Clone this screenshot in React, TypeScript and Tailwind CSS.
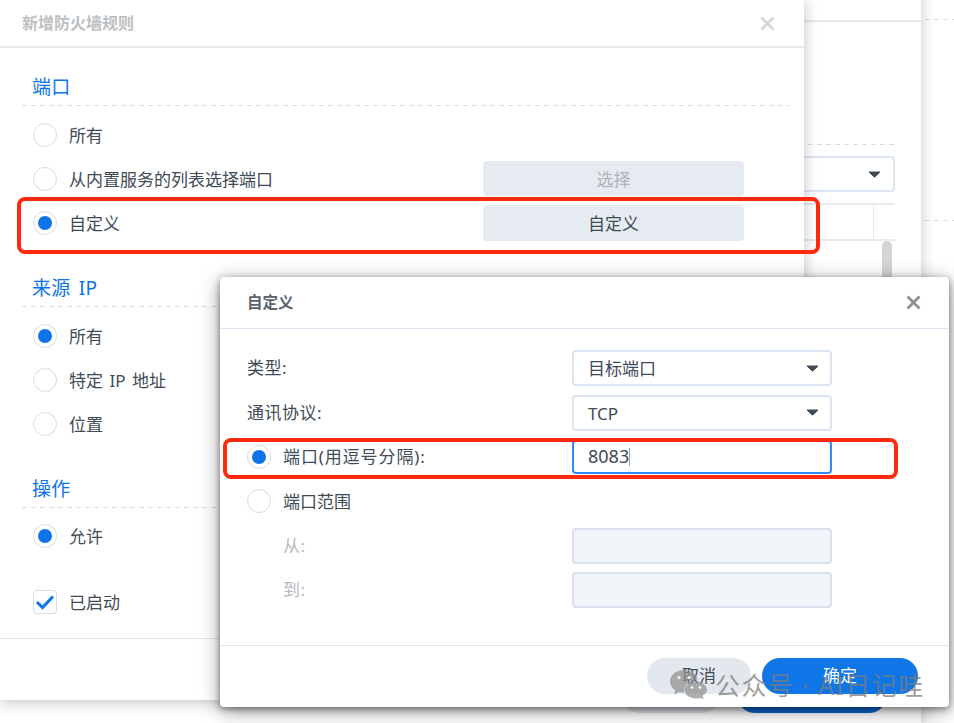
import React from "react"

const Dash = ({ className = "" }: { className?: string }) => (
    <div className={`h-px bg-[repeating-linear-gradient(90deg,#d3deea_0_5px,transparent_5px_9px)] ${className}`} />
)

const CloseIcon = ({ className = "" }: { className?: string }) => (
    <svg width="15" height="15" viewBox="0 0 15 15" className={className}>
        <path d="M1.5 1.5 L13.5 13.5 M13.5 1.5 L1.5 13.5" stroke="currentColor" strokeWidth="2.8" fill="none" />
    </svg>
)

const Caret = () => (
    <svg width="13" height="7" viewBox="0 0 13 7">
        <path d="M1 1 H12 L7 5.8 Q6.5 6.2 6 5.8 Z" fill="#414b55" stroke="#414b55" strokeWidth="1" strokeLinejoin="round" />
    </svg>
)

const Radio = ({ checked = false }: { checked?: boolean }) => (
    <span className="w-6 h-6 shrink-0 rounded-full border border-[#d0dcec] bg-white flex items-center justify-center">
        {checked && <span className="w-[14px] h-[14px] rounded-full bg-[#0d74e8]" />}
    </span>
)

const OptionRow = ({ label, checked, children }: { label: string; checked?: boolean; children?: React.ReactNode }) => (
    <div className="h-11 flex items-center pl-[11px]">
        <Radio checked={checked} />
        <span className="ml-3 pt-[2px] text-[17px] [word-spacing:2px] text-[#414b55]">{label}</span>
        {children}
    </div>
)

const SectionTitle = ({ title }: { title: string }) => (
    <div className="h-[34px] flex items-center pl-[10px]">
        <span className="text-[19px] leading-none pb-[1px] tracking-[0.3px] [word-spacing:3px] text-[#0d74e8]">{title}</span>
    </div>
)

const Select = ({ value }: { value: string }) => (
    <div className="w-[260px] h-9 rounded border-2 border-[#dbe4f0] bg-white flex items-center justify-between pl-[14px] pr-[11px] text-[17px] text-[#414b55]">
        <span className="pt-[2px]">{value}</span>
        <Caret />
    </div>
)

const FormRow = ({ children }: { children: React.ReactNode }) => (
    <div className="h-[44.4px] flex items-center">{children}</div>
)

const DisabledInput = () => <div className="w-[260px] h-9 rounded border-2 border-[#d8e1ee] bg-[#f1f4f8]" />

const WeChatIcon = () => (
    <svg width="37" height="29" viewBox="0 0 37 29">
        <path d="M14 0 C6.3 0 0 5 0 11.3 C0 15 2.1 18.2 5.4 20.2 L4 24.5 L9.2 21.9 C10.9 22.4 12.4 22.7 14.2 22.6 C13.3 15 20 9.6 27.6 9.8 C26.3 4.2 20.6 0 14 0 Z" fill="#8f8f8f" fillOpacity="0.72" />
        <path d="M26 11.5 C19.6 11.5 14.6 15.6 14.6 20.2 C14.6 24.9 19.6 28.4 26 28.4 C27.3 28.4 28.6 28.2 29.7 27.9 L33.7 29 L32.6 25.7 C35.2 24 37 22.2 37 20 C37 15.6 32 11.5 26 11.5 Z" fill="#8f8f8f" fillOpacity="0.72" />
        <circle cx="9" cy="7.5" r="1.5" fill="#fff" />
        <circle cx="19" cy="7.5" r="1.5" fill="#fff" />
        <circle cx="22" cy="17.5" r="1.3" fill="#fff" />
        <circle cx="30" cy="17.5" r="1.3" fill="#fff" />
    </svg>
)

export default function App() {
    return (
        <div
            className="relative w-[954px] h-[723px] overflow-hidden bg-white"
            style={{ fontFamily: '"Noto Sans", "Noto Sans CJK SC", sans-serif' }}
        >
            {/* farthest window, only its right edge shows */}
            <div className="absolute left-[921px] top-0 w-[33px] h-full pl-1 pt-[19px] flex flex-col">
                <Dash />
                <Dash className="mt-[200px]" />
            </div>

            {/* middle window */}
            <div className="absolute left-[-20px] top-[-30px] w-[941px] h-[760px] bg-white shadow-[0_0_14px_rgba(0,0,0,0.22)] flex flex-col">
                <div className="h-[52px] shrink-0 border-b-2 border-[#e6ebf1] flex items-center justify-end pr-[30px]">
                    <CloseIcon className="text-[#d5d7da] mt-[-44px]" />
                </div>
                <div className="pr-[26px] flex flex-col">
                    <Dash className="mt-[122px]" />
                    <div className="mt-[11px] h-9 rounded border-2 border-[#dbe4f0] flex items-center justify-end pr-3">
                        <Caret />
                    </div>
                    <div className="mt-[11px] h-[38px] border-y-2 border-[#e6ebf1] flex justify-end pr-[21px]">
                        <div className="w-px bg-[#e6ebf1]" />
                    </div>
                    <div className="self-end mr-[3px] w-[10px] h-[120px] rounded-full bg-[#d4d4d4]" />
                </div>
                <div className="mt-auto pb-[17px] pr-[34px] flex justify-end gap-[17px]">
                    <div className="w-[98px] h-9 rounded-full bg-[#e3e8ee]" />
                    <div className="w-[150px] h-9 rounded-full bg-[#0e6ad6]" />
                </div>
            </div>

            {/* add firewall rule window */}
            <div className="absolute left-0 top-0 w-[804px] h-[700px] bg-white shadow-[0_2px_14px_rgba(0,0,0,0.25)] flex flex-col">
                <div className="h-12 shrink-0 border-b-2 border-[#e6ebf1] flex items-center justify-between pl-[22px] pr-[29px]">
                    <span className="text-base font-bold text-[#bcbfc2]">新增防火墙规则</span>
                    <CloseIcon className="text-[#d5d7da]" />
                </div>
                <div className="flex-1 pl-[22px] pr-[14px] pt-[23px]">
                    <SectionTitle title="端口" />
                    <Dash />
                    <div className="mt-[7px]">
                        <OptionRow label="所有" />
                        <OptionRow label="从内置服务的列表选择端口">
                            <div className="ml-auto mr-[46px] mb-[1px] w-[261px] h-[35px] pt-[2px] rounded bg-[#e6eaf1] flex items-center justify-center text-[17px] text-[#aeb3ba]">
                                选择
                            </div>
                        </OptionRow>
                        <OptionRow label="自定义" checked>
                            <div className="ml-auto mr-[46px] w-[261px] h-9 pt-[2px] rounded bg-[#e6eaf1] flex items-center justify-center text-[17px] text-[#414b55]">
                                自定义
                            </div>
                        </OptionRow>
                    </div>
                    <div className="mt-[27px]">
                        <SectionTitle title="来源 IP" />
                    </div>
                    <Dash />
                    <div className="mt-[7px]">
                        <OptionRow label="所有" checked />
                        <OptionRow label="特定 IP 地址" />
                        <OptionRow label="位置" />
                    </div>
                    <div className="mt-[27px]">
                        <SectionTitle title="操作" />
                    </div>
                    <Dash />
                    <div className="mt-[6px]">
                        <OptionRow label="允许" checked />
                        <div className="mt-[22px] h-11 flex items-center pl-[11px]">
                            <span className="w-6 h-6 rounded border border-[#d0dcec] flex items-center justify-center">
                                <svg width="20" height="16" viewBox="0 0 20 16">
                                    <path d="M2 8 L7.5 13.5 L18 2.5" stroke="#0d74e8" strokeWidth="3" fill="none" />
                                </svg>
                            </span>
                            <span className="ml-3 pt-[2px] text-[17px] text-[#414b55]">已启动</span>
                        </div>
                    </div>
                </div>
                <div className="h-[62px] shrink-0 border-t border-[#e0e7f1]" />
            </div>

            <div className="absolute left-[17px] top-[197px] w-[803px] h-[57px] rounded-lg border-4 border-[#ff2a0e]" />

            {/* custom port dialog */}
            <div className="absolute left-[220px] top-[277px] w-[729px] h-[430px] rounded bg-white shadow-[0_2px_6px_rgba(0,0,0,0.4),0_4px_20px_rgba(0,0,0,0.4)] flex flex-col">
                <div className="h-[52px] shrink-0 border-b border-[#dbe4f0] flex items-center justify-between pl-[27px] pr-[28px]">
                    <span className="text-[15.5px] font-bold text-[#5b646d]">自定义</span>
                    <CloseIcon className="text-[#8a9199]" />
                </div>
                <div className="flex-1 pl-[27px] pt-[17px] text-[17px] text-[#414b55]">
                    <FormRow>
                        <span className="w-[325px] tracking-[0.5px]">类型:</span>
                        <Select value="目标端口" />
                    </FormRow>
                    <FormRow>
                        <span className="w-[325px] tracking-[0.5px]">通讯协议:</span>
                        <Select value="TCP" />
                    </FormRow>
                    <FormRow>
                        <div className="w-[325px] flex items-center">
                            <Radio checked />
                            <span className="ml-3 tracking-[0.9px]">端口(用逗号分隔):</span>
                        </div>
                        <div className="w-[260px] h-[34px] rounded border-2 border-[#2f8bf0] bg-white flex items-center pl-[14px] text-[18px]">
                            <span>8083</span>
                            <span className="w-px h-[18px] bg-[#a0a4a8]" />
                        </div>
                    </FormRow>
                    <FormRow>
                        <Radio />
                        <span className="ml-3">端口范围</span>
                    </FormRow>
                    <FormRow>
                        <span className="w-[289px] ml-9 tracking-[0.5px] text-[#b5b9be]">从:</span>
                        <DisabledInput />
                    </FormRow>
                    <FormRow>
                        <span className="w-[289px] ml-9 tracking-[0.5px] text-[#b5b9be]">到:</span>
                        <DisabledInput />
                    </FormRow>
                </div>
                <div className="h-[62px] shrink-0 border-t border-[#dfe5ee] flex items-start justify-end gap-[11px] pt-3 pr-[31px] text-[17px]">
                    <div className="w-[104px] h-9 rounded-full bg-[#e3e8ee] flex items-center justify-center text-[#414b55]">取消</div>
                    <div className="w-[156px] h-9 rounded-full bg-[#0e76e6] flex items-center justify-center text-white">确定</div>
                </div>
            </div>

            <div className="absolute left-[223px] top-[438px] w-[675px] h-[41px] rounded-lg border-4 border-[#ff2a0e]" />

            {/* watermark */}
            <div className="absolute left-[670px] top-[670px] flex items-center">
                <WeChatIcon />
                <span className="ml-[8px] mt-[2px] text-[25px] leading-none tracking-[1.4px] text-[#7d7d7d]/75 whitespace-nowrap">公众号 · AI日记哇</span>
            </div>
        </div>
    )
}
